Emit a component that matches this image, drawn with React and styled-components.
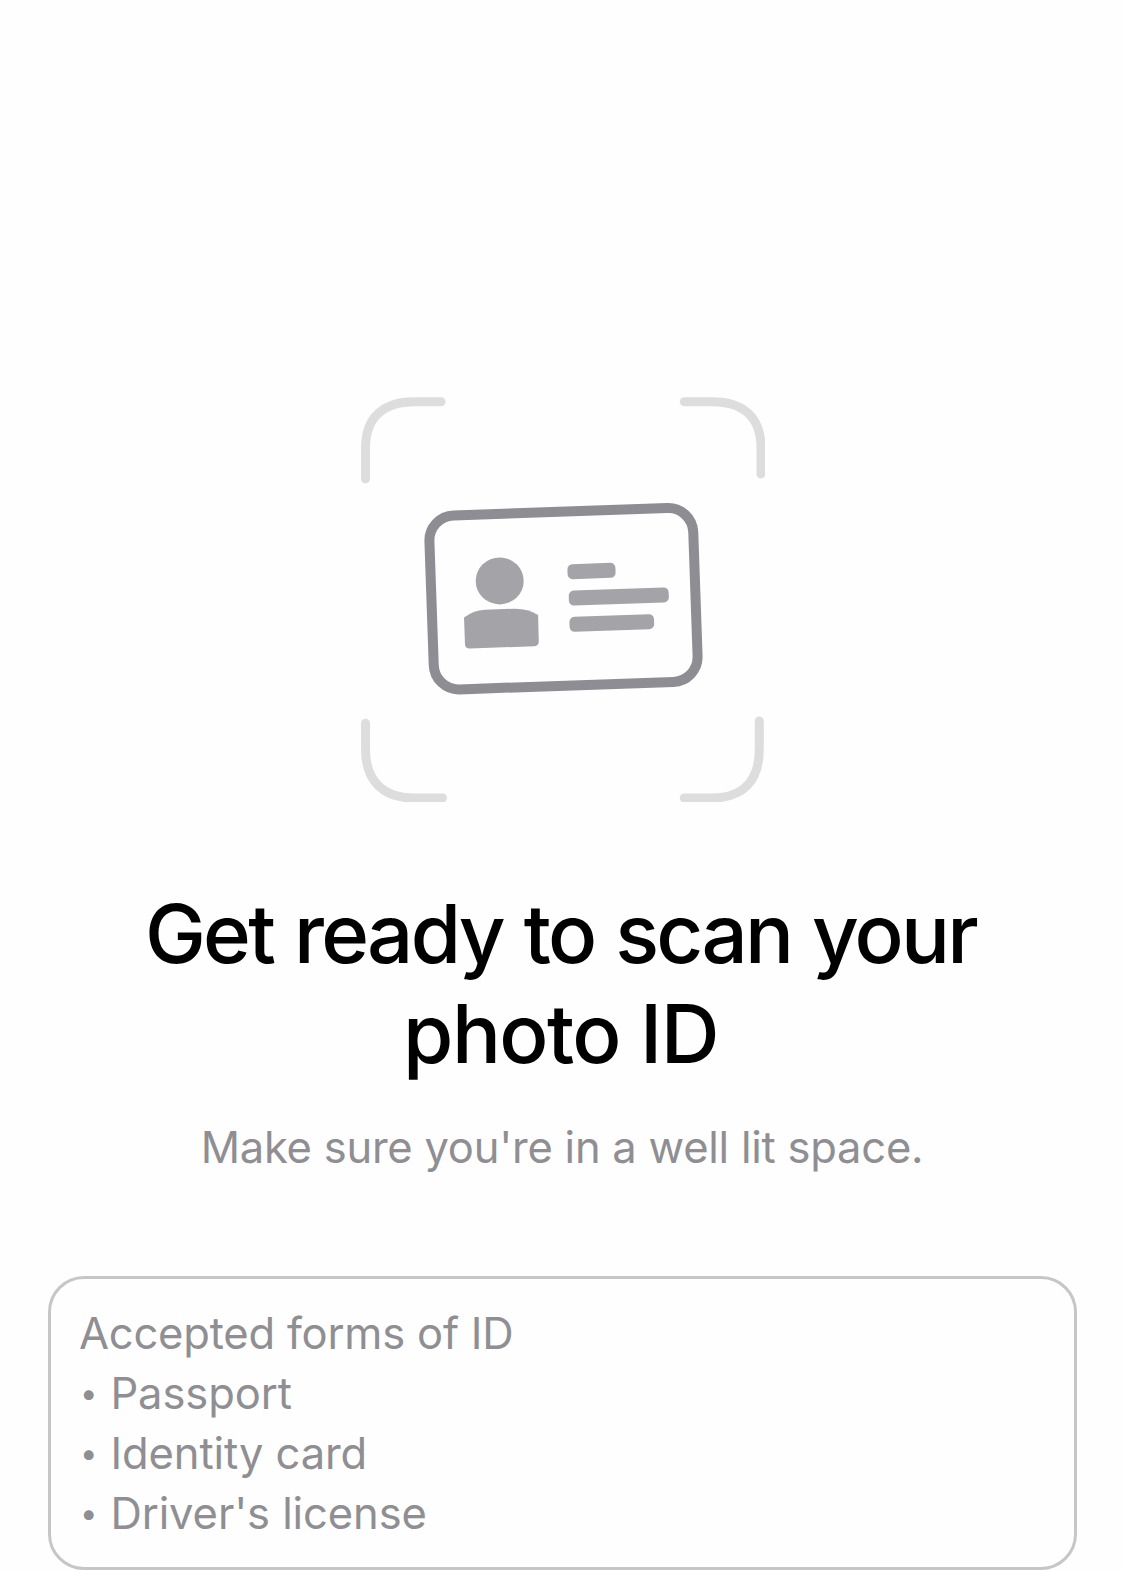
import React from "react";
import styled, { createGlobalStyle } from "styled-components";

const GlobalStyle = createGlobalStyle`
  html, body { margin: 0; padding: 0; background: #fefefe; }
  *, *::before, *::after { box-sizing: border-box; }
`;

const Screen = styled.main`
  display: flex;
  flex-direction: column;
  align-items: center;
  width: 1125px;
  height: 1570px;
  padding: 397px 48px 0;
  background: #fefefe;
  font-family: Inter, "Liberation Sans", sans-serif;
`;

const Illustration = styled.svg`
  display: block;
  flex: none;
  width: 405px;
  height: 405px;
`;

const Title = styled.h1`
  margin: 82px 0 0;
  padding-right: 4px;
  color: #000;
  font-size: 81.5px;
  font-weight: 500;
  line-height: 100px;
  text-align: center;
  white-space: nowrap;
`;

const TitleLine = styled.span`
  display: block;
  letter-spacing: ${({ $tracking }) => $tracking}px;
  word-spacing: ${({ $wordGap = 0 }) => $wordGap}px;
`;

const Subtitle = styled.p`
  margin: 33px 0 0;
  padding-right: 1px;
  color: #8e8e93;
  font-size: 43.5px;
  line-height: 60px;
  letter-spacing: -0.23px;
  text-align: center;
  white-space: nowrap;
`;

const AcceptedCard = styled.section`
  align-self: stretch;
  flex: none;
  height: 294px;
  margin-top: 99px;
  padding: 24px 28px;
  border: 3px solid #c6c6c6;
  border-radius: 36px;
  color: #8e8e93;
  font-size: 43.5px;
  line-height: 60px;
`;

const CardHeading = styled.h2`
  margin: 0;
  font: inherit;
  letter-spacing: -0.2px;
`;

const FormList = styled.ul`
  margin: 0;
  padding: 0;
  list-style: none;
`;

const FormItem = styled.li`
  display: flex;
  height: 60px;
`;

const Bullet = styled.span`
  flex: none;
  width: 31.4px;
  padding-left: 1px;
  font-size: 31px;
`;

const FormName = styled.span`
  letter-spacing: -0.09px;
  white-space: nowrap;
`;

function ScanIllustration() {
  return (
    <Illustration viewBox="360 397 405 405" aria-hidden="true">
      <g fill="none" stroke="#dddddd" strokeWidth="9" strokeLinecap="round">
        <path d="M365.5 478.7V448C365.5 418 383 401.7 414 401.7H441" />
        <path d="M684.3 401.7H712C744 401.7 761 418 761 448V474" />
        <path d="M365.5 723.3V749C365.5 781 383 798 414 798H442.5" />
        <path d="M684.3 798H712C743 798 759.3 781 759.3 749V721" />
      </g>
      <rect
        x="431.5" y="511.7" width="264" height="174" rx="25"
        fill="none" stroke="#8e8d93" strokeWidth="10"
        transform="rotate(-2 563.5 598.7)"
      />
      <g fill="#a4a3a8">
        <ellipse cx="499.7" cy="580.9" rx="24" ry="23.5" />
        <path d="M464 617.6Q473 610.6 485 609.8L514 608.7Q527 608.3 538.1 615L538.8 641.5Q538.8 645.8 534.5 646.2L469.8 648.6Q465.2 648.6 465 644.2Z" />
        <rect x="567.5" y="563.5" width="48" height="15" rx="5" transform="rotate(-2 591.5 571)" />
        <rect x="568.8" y="589" width="100" height="15" rx="5" transform="rotate(-2 618.8 596.5)" />
        <rect x="569.5" y="615.5" width="84.6" height="15" rx="5" transform="rotate(-2 611.8 623)" />
      </g>
    </Illustration>
  );
}

const forms = ["Passport", "Identity card", "Driver's license"];

export default function App() {
  return (
    <>
      <GlobalStyle />
      <Screen>
        <ScanIllustration />
        <Title>
          <TitleLine $tracking={-2.75} $wordGap={1.8}>Get ready to scan your</TitleLine>
          <TitleLine $tracking={-1.6}>photo ID</TitleLine>
        </Title>
        <Subtitle>Make sure you're in a well lit space.</Subtitle>
        <AcceptedCard>
          <CardHeading>Accepted forms of ID</CardHeading>
          <FormList>
            {forms.map((name) => (
              <FormItem key={name}>
                <Bullet>•</Bullet>
                <FormName>{name}</FormName>
              </FormItem>
            ))}
          </FormList>
        </AcceptedCard>
      </Screen>
    </>
  );
}
